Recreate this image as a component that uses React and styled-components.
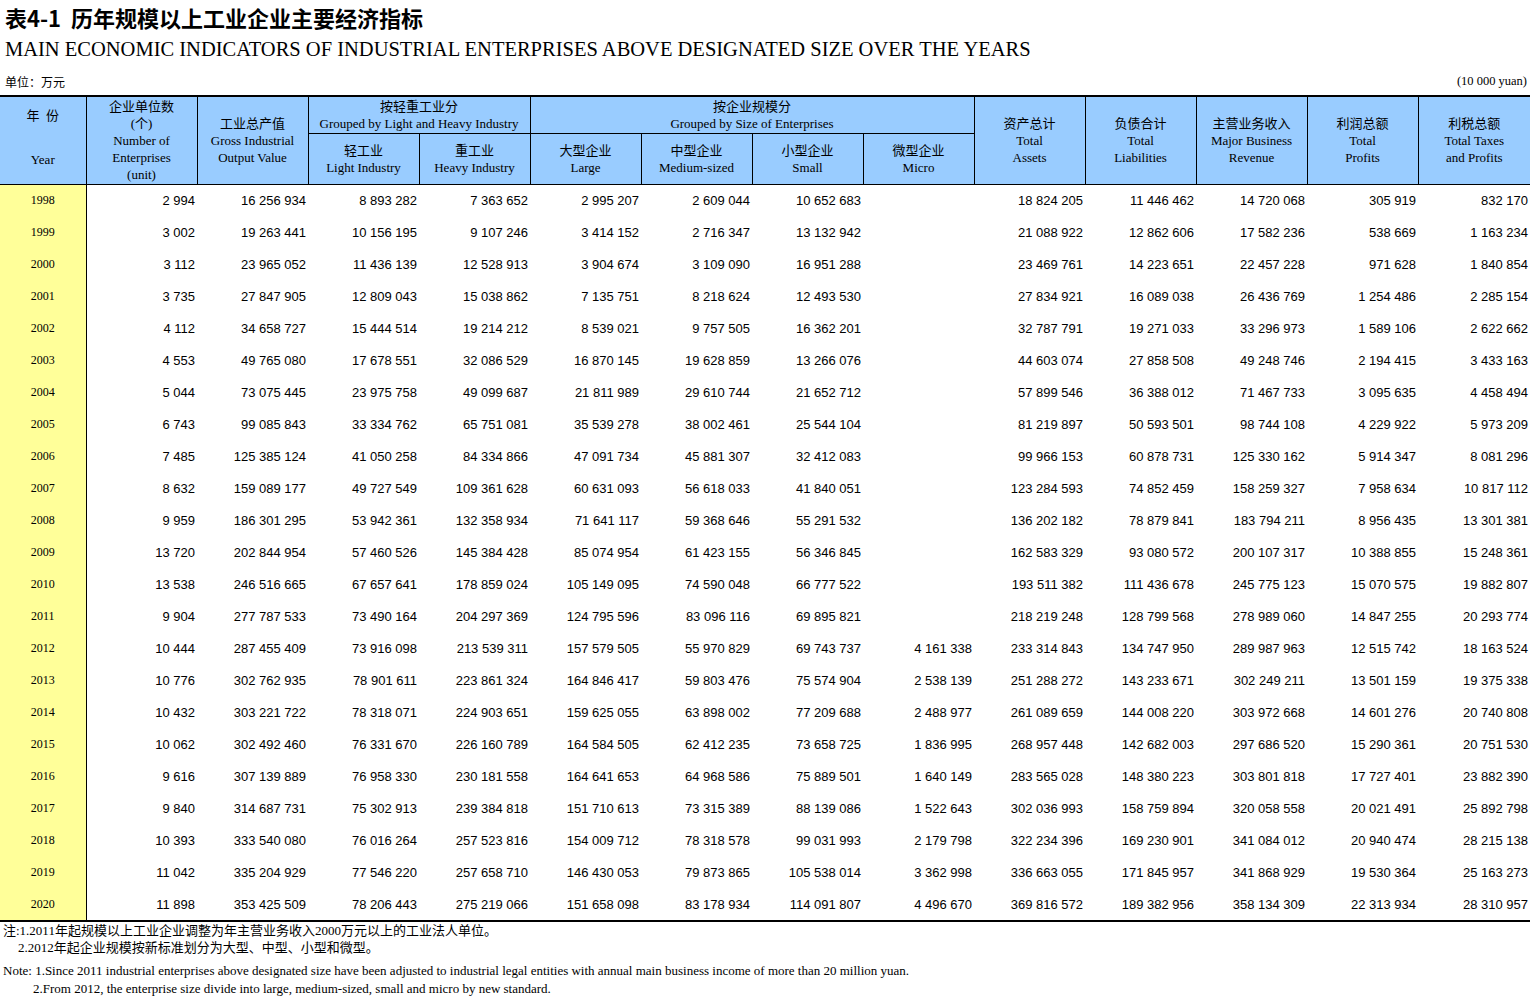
import React from "react";
import styled, { createGlobalStyle } from "styled-components";

const GlobalStyle = createGlobalStyle`
  html, body { margin: 0; padding: 0; background: #fff; }
  body { font-family: "Liberation Serif", "Noto Sans CJK SC", serif; color: #000; }
`;

const Page = styled.div`
  width: 1530px;
`;

const TitleCN = styled.div`
  height: 34px;
  line-height: 34px;
  padding-left: 5px;
  font-family: "Noto Sans CJK SC", sans-serif;
  font-weight: 700;
  font-size: 22px;
`;

const TitleEN = styled.div`
  height: 30px;
  line-height: 30px;
  padding-left: 5px;
  font-family: "Liberation Serif", serif;
  font-size: 20.5px;
`;

const UnitRow = styled.div`
  height: 31px;
  box-sizing: border-box;
  padding: 3px 3px 0 5px;
  display: flex;
  align-items: center;
  justify-content: space-between;
  font-size: 12px;
`;

const UnitCN = styled.span`
  font-family: "Noto Sans CJK SC", sans-serif;
`;

const UnitEN = styled.span`
  font-family: "Liberation Serif", serif;
  font-size: 12.5px;
`;

const Table = styled.table`
  width: 1530px;
  table-layout: fixed;
  border-collapse: collapse;
  border-top: 2px solid #000;
  border-bottom: 2px solid #000;
`;

const HeadRow = styled.tr`
  height: ${(p) => p.$h}px;
`;

const Th = styled.th`
  background: #99ccff;
  border: 1px solid #000;
  border-top: ${(p) => (p.$top ? "none" : "1px solid #000")};
  font-weight: normal;
  font-size: 13px;
  line-height: 17px;
  text-align: center;
  vertical-align: middle;
  padding: 0 2px;
  font-family: "Liberation Serif", "Noto Sans CJK SC", serif;
  &:first-child { border-left: none; }
  &:last-child { border-right: none; }
`;

const YearHead = styled.div`
  height: 87px;
  box-sizing: border-box;
  padding: 10px 0 16px;
  display: flex;
  flex-direction: column;
  justify-content: space-between;
`;

const Line = styled.div`
  white-space: nowrap;
`;

const BodyRow = styled.tr`
  height: 32px;
`;

const YearCell = styled.td`
  background: #ffff99;
  border-right: 1px solid #000;
  text-align: center;
  font-family: "Liberation Serif", serif;
  font-size: 12px;
  padding: 0;
`;

const NumCell = styled.td`
  text-align: right;
  font-family: "Liberation Sans", Arial, sans-serif;
  font-size: 13px;
  padding: 0 2px 0 0;
  white-space: nowrap;
`;

const NotesCN = styled.div`
  padding-left: 3px;
  font-size: 13px;
  line-height: 17px;
  font-family: "Liberation Serif", "Noto Sans CJK SC", serif;
`;

const NotesEN = styled.div`
  margin-top: 6px;
  padding-left: 3px;
  font-size: 13px;
  line-height: 18px;
  font-family: "Liberation Serif", serif;
`;

const NoteLine = styled.div`
  padding-left: ${(p) => p.$indent || 0}px;
  white-space: nowrap;
`;

const raw = `1998|2 994|16 256 934|8 893 282|7 363 652|2 995 207|2 609 044|10 652 683||18 824 205|11 446 462|14 720 068|305 919|832 170
1999|3 002|19 263 441|10 156 195|9 107 246|3 414 152|2 716 347|13 132 942||21 088 922|12 862 606|17 582 236|538 669|1 163 234
2000|3 112|23 965 052|11 436 139|12 528 913|3 904 674|3 109 090|16 951 288||23 469 761|14 223 651|22 457 228|971 628|1 840 854
2001|3 735|27 847 905|12 809 043|15 038 862|7 135 751|8 218 624|12 493 530||27 834 921|16 089 038|26 436 769|1 254 486|2 285 154
2002|4 112|34 658 727|15 444 514|19 214 212|8 539 021|9 757 505|16 362 201||32 787 791|19 271 033|33 296 973|1 589 106|2 622 662
2003|4 553|49 765 080|17 678 551|32 086 529|16 870 145|19 628 859|13 266 076||44 603 074|27 858 508|49 248 746|2 194 415|3 433 163
2004|5 044|73 075 445|23 975 758|49 099 687|21 811 989|29 610 744|21 652 712||57 899 546|36 388 012|71 467 733|3 095 635|4 458 494
2005|6 743|99 085 843|33 334 762|65 751 081|35 539 278|38 002 461|25 544 104||81 219 897|50 593 501|98 744 108|4 229 922|5 973 209
2006|7 485|125 385 124|41 050 258|84 334 866|47 091 734|45 881 307|32 412 083||99 966 153|60 878 731|125 330 162|5 914 347|8 081 296
2007|8 632|159 089 177|49 727 549|109 361 628|60 631 093|56 618 033|41 840 051||123 284 593|74 852 459|158 259 327|7 958 634|10 817 112
2008|9 959|186 301 295|53 942 361|132 358 934|71 641 117|59 368 646|55 291 532||136 202 182|78 879 841|183 794 211|8 956 435|13 301 381
2009|13 720|202 844 954|57 460 526|145 384 428|85 074 954|61 423 155|56 346 845||162 583 329|93 080 572|200 107 317|10 388 855|15 248 361
2010|13 538|246 516 665|67 657 641|178 859 024|105 149 095|74 590 048|66 777 522||193 511 382|111 436 678|245 775 123|15 070 575|19 882 807
2011|9 904|277 787 533|73 490 164|204 297 369|124 795 596|83 096 116|69 895 821||218 219 248|128 799 568|278 989 060|14 847 255|20 293 774
2012|10 444|287 455 409|73 916 098|213 539 311|157 579 505|55 970 829|69 743 737|4 161 338|233 314 843|134 747 950|289 987 963|12 515 742|18 163 524
2013|10 776|302 762 935|78 901 611|223 861 324|164 846 417|59 803 476|75 574 904|2 538 139|251 288 272|143 233 671|302 249 211|13 501 159|19 375 338
2014|10 432|303 221 722|78 318 071|224 903 651|159 625 055|63 898 002|77 209 688|2 488 977|261 089 659|144 008 220|303 972 668|14 601 276|20 740 808
2015|10 062|302 492 460|76 331 670|226 160 789|164 584 505|62 412 235|73 658 725|1 836 995|268 957 448|142 682 003|297 686 520|15 290 361|20 751 530
2016|9 616|307 139 889|76 958 330|230 181 558|164 641 653|64 968 586|75 889 501|1 640 149|283 565 028|148 380 223|303 801 818|17 727 401|23 882 390
2017|9 840|314 687 731|75 302 913|239 384 818|151 710 613|73 315 389|88 139 086|1 522 643|302 036 993|158 759 894|320 058 558|20 021 491|25 892 798
2018|10 393|333 540 080|76 016 264|257 523 816|154 009 712|78 318 578|99 031 993|2 179 798|322 234 396|169 230 901|341 084 012|20 940 474|28 215 138
2019|11 042|335 204 929|77 546 220|257 658 710|146 430 053|79 873 865|105 538 014|3 362 998|336 663 055|171 845 957|341 868 929|19 530 364|25 163 273
2020|11 898|353 425 509|78 206 443|275 219 066|151 658 098|83 178 934|114 091 807|4 496 670|369 816 572|189 382 956|358 134 309|22 313 934|28 310 957`;

const rows = raw.split("\n").map((l) => l.split("|"));

const widths = [86, 111, 111, 111, 111, 111, 111, 111, 111, 111, 111, 111, 111, 112];

const Lines = ({ items }) => (
  <>
    {items.map((t, i) => (
      <Line key={i}>{t}</Line>
    ))}
  </>
);

export default function App() {
  return (
    <Page>
      <GlobalStyle />
      <TitleCN>表4-1&nbsp;&nbsp;历年规模以上工业企业主要经济指标</TitleCN>
      <TitleEN>MAIN ECONOMIC INDICATORS OF INDUSTRIAL ENTERPRISES ABOVE DESIGNATED SIZE OVER THE YEARS</TitleEN>
      <UnitRow>
        <UnitCN>单位：万元</UnitCN>
        <UnitEN>(10 000 yuan)</UnitEN>
      </UnitRow>
      <Table>
        <colgroup>
          {widths.map((w, i) => (
            <col key={i} style={{ width: w }} />
          ))}
        </colgroup>
        <thead>
          <HeadRow $h={37}>
            <Th rowSpan={2} $top>
              <YearHead>
                <Line>年&nbsp;&nbsp;份</Line>
                <Line>Year</Line>
              </YearHead>
            </Th>
            <Th rowSpan={2} $top>
              <Lines items={["企业单位数", "(个)", "Number of", "Enterprises", "(unit)"]} />
            </Th>
            <Th rowSpan={2} $top>
              <Lines items={["工业总产值", "Gross Industrial", "Output Value"]} />
            </Th>
            <Th colSpan={2} $top>
              <Lines items={["按轻重工业分", "Grouped by Light and Heavy Industry"]} />
            </Th>
            <Th colSpan={4} $top>
              <Lines items={["按企业规模分", "Grouped by Size of Enterprises"]} />
            </Th>
            <Th rowSpan={2} $top>
              <Lines items={["资产总计", "Total", "Assets"]} />
            </Th>
            <Th rowSpan={2} $top>
              <Lines items={["负债合计", "Total", "Liabilities"]} />
            </Th>
            <Th rowSpan={2} $top>
              <Lines items={["主营业务收入", "Major Business", "Revenue"]} />
            </Th>
            <Th rowSpan={2} $top>
              <Lines items={["利润总额", "Total", "Profits"]} />
            </Th>
            <Th rowSpan={2} $top>
              <Lines items={["利税总额", "Total Taxes", "and Profits"]} />
            </Th>
          </HeadRow>
          <HeadRow $h={50}>
            <Th>
              <Lines items={["轻工业", "Light Industry"]} />
            </Th>
            <Th>
              <Lines items={["重工业", "Heavy Industry"]} />
            </Th>
            <Th>
              <Lines items={["大型企业", "Large"]} />
            </Th>
            <Th>
              <Lines items={["中型企业", "Medium-sized"]} />
            </Th>
            <Th>
              <Lines items={["小型企业", "Small"]} />
            </Th>
            <Th>
              <Lines items={["微型企业", "Micro"]} />
            </Th>
          </HeadRow>
        </thead>
        <tbody>
          {rows.map((r) => (
            <BodyRow key={r[0]}>
              <YearCell>{r[0]}</YearCell>
              {r.slice(1).map((v, i) => (
                <NumCell key={i}>{v}</NumCell>
              ))}
            </BodyRow>
          ))}
        </tbody>
      </Table>
      <NotesCN>
        <NoteLine>注:1.2011年起规模以上工业企业调整为年主营业务收入2000万元以上的工业法人单位。</NoteLine>
        <NoteLine $indent={15}>2.2012年起企业规模按新标准划分为大型、中型、小型和微型。</NoteLine>
      </NotesCN>
      <NotesEN>
        <NoteLine>
          Note: 1.Since 2011 industrial enterprises above designated size have been adjusted to industrial legal entities with annual main business income of more than 20 million yuan.
        </NoteLine>
        <NoteLine $indent={30}>2.From 2012, the enterprise size divide into large, medium-sized, small and micro by new standard.</NoteLine>
      </NotesEN>
    </Page>
  );
}
